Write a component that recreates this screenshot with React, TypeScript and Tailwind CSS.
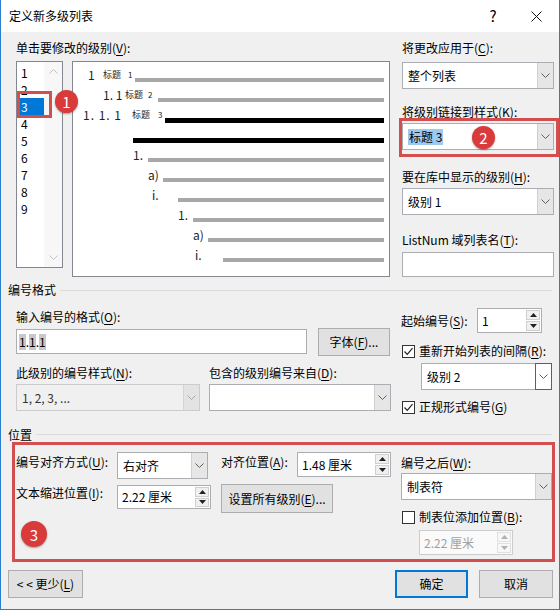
import React from 'react'

// 小さな下向きシェブロン
const Chevron = ({ color = '#606060' }: { color?: string }) => (
  <svg width="9" height="5" viewBox="0 0 9 5">
    <path d="M0.5 0.5 L4.5 4.5 L8.5 0.5" fill="none" stroke={color} strokeWidth="1" />
  </svg>
)

const ChevronUp = ({ color = '#c2c2c2' }: { color?: string }) => (
  <svg width="9" height="5" viewBox="0 0 9 5">
    <path d="M0.5 4.5 L4.5 0.5 L8.5 4.5" fill="none" stroke={color} strokeWidth="1" />
  </svg>
)

const Tri = ({ up, color = '#222' }: { up?: boolean; color?: string }) => (
  <svg width="7" height="4" viewBox="0 0 7 4">
    <path d={up ? 'M0 4 L3.5 0 L7 4 Z' : 'M0 0 L3.5 4 L7 0 Z'} fill={color} />
  </svg>
)

const Check = () => (
  <svg width="11" height="11" viewBox="0 0 11 11">
    <path d="M1.5 5.5 L4.3 8.3 L9.5 2.2" fill="none" stroke="#222" strokeWidth="1.2" />
  </svg>
)

function Select({
  children,
  className = '',
  disabled = false,
  focused = false,
}: {
  children?: React.ReactNode
  className?: string
  disabled?: boolean
  focused?: boolean
}) {
  return (
    <div
      className={`flex h-[27px] border ${
        disabled ? 'border-[#cccccc] bg-[#f0f0f0] text-[#6d6d6d]' : 'border-[#abadb3] bg-white'
      } ${className}`}
    >
      <div className="flex-1 flex items-center pl-[5px] whitespace-nowrap overflow-hidden">{children}</div>
      <div
        className={`w-[16px] flex items-center justify-center ${
          focused
            ? 'bg-white border border-[#0078d7] -my-px -mr-px w-[17px]'
            : disabled
            ? 'bg-[#e3e3e3] border-l border-[#d4d4d4]'
            : 'bg-[#e6e6e6] border-l border-[#d0d0d0]'
        }`}
      >
        <Chevron color={disabled ? '#a8a8a8' : '#606060'} />
      </div>
    </div>
  )
}

function Spinner({
  value,
  className = '',
  disabled = false,
}: {
  value: string
  className?: string
  disabled?: boolean
}) {
  return (
    <div
      className={`flex border ${
        disabled ? 'border-[#cccccc] bg-[#fafafa] text-[#a0a0a0]' : 'border-[#abadb3] bg-white'
      } ${className}`}
    >
      <div className="flex-1 flex items-center pl-[4px] whitespace-nowrap">{value}</div>
      <div className="w-[14px] flex flex-col my-[1px] mr-[1px] gap-[1px]">
        <div
          className={`flex-1 flex items-center justify-center border ${
            disabled ? 'border-[#e0e0e0] bg-[#f7f7f7]' : 'border-[#cfcfcf] bg-[#f0f0f0]'
          }`}
        >
          <Tri up color={disabled ? '#b0b0b0' : '#222'} />
        </div>
        <div
          className={`flex-1 flex items-center justify-center border ${
            disabled ? 'border-[#e0e0e0] bg-[#f7f7f7]' : 'border-[#cfcfcf] bg-[#f0f0f0]'
          }`}
        >
          <Tri color={disabled ? '#b0b0b0' : '#222'} />
        </div>
      </div>
    </div>
  )
}

function Button({ children, className = '' }: { children: React.ReactNode; className?: string }) {
  return (
    <div className={`flex items-center justify-center bg-[#e1e1e1] border border-[#adadad] ${className}`}>
      {children}
    </div>
  )
}

function CheckBox({ checked, label }: { checked?: boolean; label: React.ReactNode }) {
  return (
    <div className="flex items-center h-[16px]">
      <div className="w-[13px] h-[13px] ml-[1px] border border-[#333333] bg-white flex items-center justify-center">
        {checked && <Check />}
      </div>
      <span className="ml-[4px] whitespace-nowrap">{label}</span>
    </div>
  )
}

const Badge = ({ n, className }: { n: string; className: string }) => (
  <div
    className={`absolute rounded-full bg-[#d93a3a] text-white flex items-center justify-center text-[15px] leading-none shadow-[0_1px_2px_rgba(0,0,0,0.35)] ${className}`}
  >
    {n}
  </div>
)

const U = ({ c }: { c: string }) => <span className="underline underline-offset-2">{c}</span>

const Bar = ({ dark }: { dark?: boolean }) => (
  <div className={dark ? 'flex-1 h-[5px] bg-black mt-[10px]' : 'flex-1 h-[4px] bg-[#a8a8a8] mt-[10px]'} />
)

export default function App() {
  const levels = ['1', '2', '3', '4', '5', '6', '7', '8', '9']

  return (
    <div className="w-[560px] h-[610px] bg-[#f0f0f0] border-x border-b border-[#2b7fd0] flex flex-col text-[12px] leading-[16px] text-black font-['Noto_Sans_CJK_SC','Noto_Sans',sans-serif] overflow-hidden">
      {/* タイトルバー */}
      <div className="h-[32px] bg-white flex items-center pl-[8px] shrink-0">
        <span className="text-[12px]">定义新多级列表</span>
        <span className="ml-auto text-[15px] w-[16px] text-center">?</span>
        <div className="ml-[29px] mr-[17px] w-[12px] flex items-center justify-center">
          <svg width="11" height="11" viewBox="0 0 11 11">
            <path d="M0.5 0.5 L10.5 10.5 M10.5 0.5 L0.5 10.5" stroke="#111" strokeWidth="1" />
          </svg>
        </div>
      </div>

      {/* レベル選択とプレビュー */}
      <div className="flex pl-[15px] mt-[8px] h-[237px] shrink-0">
        <div className="w-[375px]">
          <div>
            单击要修改的级别(<U c="V" />):
          </div>
          <div className="relative flex items-start gap-[9px] mt-[5px]">
            <div className="w-[47px] h-[207px] border border-[#828790] bg-white flex">
              <div className="w-[27px] pl-[1px] pt-[2px]">
                {levels.map(l => (
                  <div
                    key={l}
                    className={`h-[17px] pl-[3px] flex items-center ${l === '3' ? 'bg-[#0078d7] text-white' : ''}`}
                  >
                    {l}
                  </div>
                ))}
              </div>
              <div className="flex-1 bg-[#f7f7f7] flex flex-col items-center justify-between py-[7px]">
                <ChevronUp />
                <Chevron color="#c2c2c2" />
              </div>
            </div>

            <div className="w-[318px] h-[216px] border border-[#828790] bg-white pt-[3px] pr-[5px] text-[#222] overflow-hidden">
              <div className="flex items-center h-[20px]">
                <div className="w-[62px] shrink-0 flex items-center pl-[15px] whitespace-nowrap">
                  <span className="w-[15px]">1</span>
                  <span className="w-[25px] text-[9px]">标题</span>
                  <span className="text-[8px]">1</span>
                </div>
                <Bar />
              </div>
              <div className="flex items-center h-[20px]">
                <div className="w-[85px] shrink-0 flex items-center pl-[30px] whitespace-nowrap">
                  <span className="w-[22px]">1. 1</span>
                  <span className="w-[23px] text-[9px]">标题</span>
                  <span className="text-[8px]">2</span>
                </div>
                <Bar />
              </div>
              <div className="flex items-center h-[20px]">
                <div className="w-[92px] shrink-0 flex items-center pl-[10px] whitespace-nowrap">
                  <span className="w-[49px] tracking-[1px]">1. 1. 1</span>
                  <span className="w-[26px] text-[9px]">标题</span>
                  <span className="text-[8px]">3</span>
                </div>
                <Bar dark />
              </div>
              <div className="flex items-center h-[20px]">
                <div className="w-[60px] shrink-0" />
                <Bar dark />
              </div>
              <div className="flex items-center h-[20px]">
                <div className="w-[75px] shrink-0 pl-[60px]">1.</div>
                <Bar />
              </div>
              <div className="flex items-center h-[20px]">
                <div className="w-[90px] shrink-0 pl-[75px]">a)</div>
                <Bar />
              </div>
              <div className="flex items-center h-[20px]">
                <div className="w-[105px] shrink-0 pl-[79px]">i.</div>
                <Bar />
              </div>
              <div className="flex items-center h-[20px]">
                <div className="w-[120px] shrink-0 pl-[105px]">1.</div>
                <Bar />
              </div>
              <div className="flex items-center h-[20px]">
                <div className="w-[135px] shrink-0 pl-[120px]">a)</div>
                <Bar />
              </div>
              <div className="flex items-center h-[20px]">
                <div className="w-[150px] shrink-0 pl-[122px]">i.</div>
                <Bar />
              </div>
            </div>

            {/* 注釈 1 */}
            <div className="absolute left-[1px] top-[30px] w-[35px] h-[27px] border-[3px] border-[#d24f4f]" />
            <Badge n="1" className="left-[39px] top-[29px] w-[23px] h-[23px]" />
          </div>
        </div>

        <div className="relative ml-[11px] w-[152px]">
          <div>
            将更改应用于(<U c="C" />):
          </div>
          <Select className="mt-[6px]">整个列表</Select>
          <div className="mt-[15px] whitespace-nowrap">
            将级别链接到样式(<U c="K" />):
          </div>
          <Select className="mt-[3px]">
            <span className="bg-[#9fcaf0] px-[1px]">标题 3</span>
          </Select>
          <div className="mt-[19px] whitespace-nowrap">
            要在库中显示的级别(<U c="H" />):
          </div>
          <Select className="mt-[3px]">级别 1</Select>
          <div className="mt-[17px] whitespace-nowrap">
            ListNum 域列表名(<U c="T" />):
          </div>
          <div className="mt-[4px] h-[25px] border border-[#abadb3] bg-white" />

          {/* 注釈 2 */}
          <div className="absolute -left-[3px] top-[78px] w-[160px] h-[39px] border-[3px] border-[#d24f4f]" />
          <Badge n="2" className="left-[70px] top-[86px] w-[23px] h-[23px]" />
        </div>
      </div>

      {/* 编号格式 */}
      <div className="flex items-center pl-[7px] pr-[7px] mt-[5px] h-[16px] shrink-0">
        <span>编号格式</span>
        <div className="flex-1 ml-[4px] border-t border-[#dcdcdc]" />
      </div>

      <div className="flex pl-[15px] h-[117px] shrink-0">
        <div className="w-[375px]">
          <div className="mt-[11px]">
            输入编号的格式(<U c="O" />):
          </div>
          <div className="flex items-start mt-[3px]">
            <div className="w-[291px] h-[25px] mt-[1px] border border-[#abadb3] bg-white flex items-center pl-[2px]">
              <span className="bg-[#c8c8c8]">1</span>.<span className="bg-[#c8c8c8]">1</span>.
              <span className="bg-[#c8c8c8]">1</span>
            </div>
            <Button className="ml-[11px] w-[72px] h-[28px]">
              <span>
                字体(<U c="F" />
                )...
              </span>
            </Button>
          </div>
          <div className="flex mt-[9px]">
            <div className="w-[193px]">
              此级别的编号样式(<U c="N" />):
            </div>
            <div>
              包含的级别编号来自(<U c="D" />):
            </div>
          </div>
          <div className="flex mt-[3px]">
            <Select disabled className="w-[184px]">
              <span className="text-[#333]">1, 2, 3, ...</span>
            </Select>
            <Select className="ml-[9px] w-[182px]" />
          </div>
        </div>

        <div className="ml-[10px] w-[152px]">
          <div className="flex items-center mt-[10px]">
            <div className="w-[76px]">
              起始编号(<U c="S" />):
            </div>
            <Spinner value="1" className="w-[65px] h-[25px]" />
          </div>
          <div className="mt-[10px]">
            <CheckBox
              checked
              label={
                <>
                  重新开始列表的间隔(<U c="R" />):
                </>
              }
            />
          </div>
          <Select focused className="mt-[4px] ml-[20px] w-[131px]">
            级别 2
          </Select>
          <div className="mt-[9px]">
            <CheckBox
              checked
              label={
                <>
                  正规形式编号(<U c="G" />)
                </>
              }
            />
          </div>
        </div>
      </div>

      {/* 位置 */}
      <div className="flex items-center pl-[7px] pr-[7px] mt-[12px] h-[15px] shrink-0">
        <span>位置</span>
        <div className="flex-1 ml-[4px] border-t border-[#dcdcdc]" />
      </div>

      <div className="relative ml-[11px] w-[543px] h-[120px] border-[3px] border-[#d24f4f] flex shrink-0">
        <div className="w-[376px] pl-[1px] pt-[7px]">
          <div className="flex items-start h-[27px]">
            <div className="w-[101px] mt-[2px] whitespace-nowrap">
              编号对齐方式(<U c="U" />):
            </div>
            <Select className="w-[91px]">右对齐</Select>
            <div className="ml-[13px] w-[76px] mt-[2px] whitespace-nowrap">
              对齐位置(<U c="A" />):
            </div>
            <Spinner value="1.48 厘米" className="w-[94px] h-[25px]" />
          </div>
          <div className="flex items-start mt-[5px]">
            <div className="w-[101px] mt-[1px] whitespace-nowrap">
              文本缩进位置(<U c="I" />):
            </div>
            <Spinner value="2.22 厘米" className="w-[94px] h-[24px] mt-[1px]" />
            <Button className="ml-[10px] w-[112px] h-[29px]">
              <span>
                设置所有级别(<U c="E" />
                )...
              </span>
            </Button>
          </div>
        </div>
        <div className="ml-[10px] w-[151px] pt-[10px]">
          <div>
            编号之后(<U c="W" />):
          </div>
          <Select className="mt-[2px]">制表符</Select>
          <div className="mt-[9px]">
            <CheckBox
              label={
                <>
                  制表位添加位置(<U c="B" />):
                </>
              }
            />
          </div>
          <Spinner disabled value="2.22 厘米" className="mt-[5px] ml-[18px] w-[94px] h-[25px]" />
        </div>

        {/* 注釈 3 */}
        <Badge n="3" className="left-[6px] top-[76px] w-[26px] h-[26px]" />
      </div>

      {/* 下部ボタン */}
      <div className="flex pl-[7px] pr-[6px] mt-[8px] shrink-0">
        <Button className="w-[75px] h-[28px]">
          <span>
            &lt; &lt; 更少(<U c="L" />)
          </span>
        </Button>
        <div className="ml-auto flex gap-[11px]">
          <div className="w-[73px] h-[28px] flex items-center justify-center bg-[#e1e1e1] border-2 border-[#0078d7]">
            确定
          </div>
          <Button className="w-[74px] h-[28px]">取消</Button>
        </div>
      </div>
    </div>
  )
}
